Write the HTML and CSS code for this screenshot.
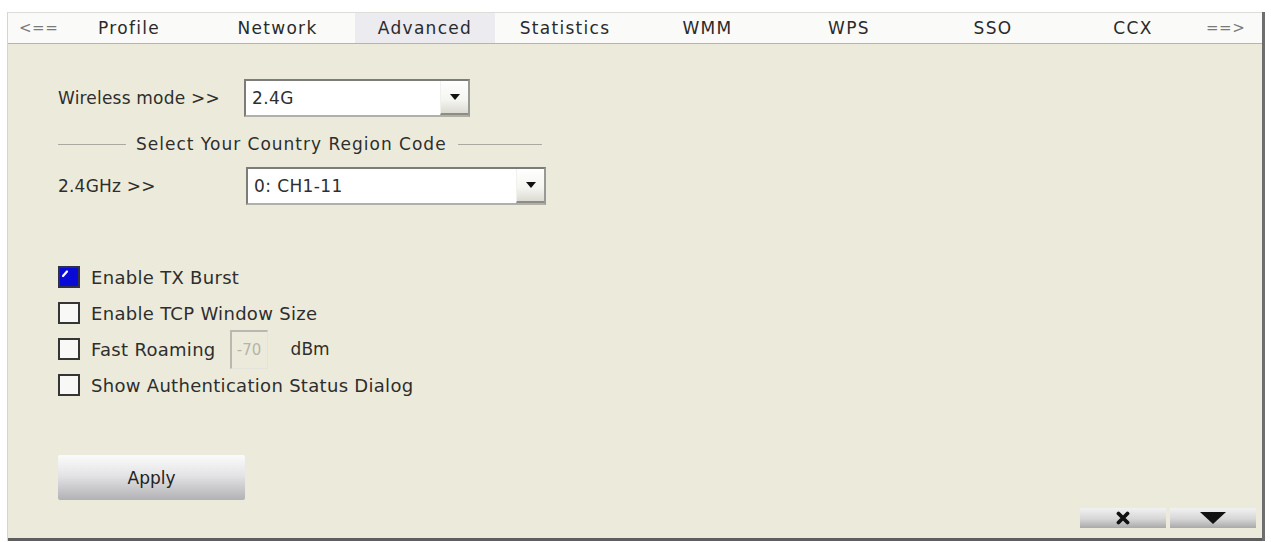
FILE: index.html
```html
<!DOCTYPE html>
<html>
<head>
<meta charset="utf-8">
<link rel="stylesheet" href="styles.css">
</head>
<body>
<div class="window">
  <div class="tabs">
    <div class="tab t-prev arrow">&lt;==</div>
    <div class="tab t-profile">Profile</div>
    <div class="tab t-network">Network</div>
    <div class="tab t-adv active">Advanced</div>
    <div class="tab t-stat">Statistics</div>
    <div class="tab t-wmm">WMM</div>
    <div class="tab t-wps">WPS</div>
    <div class="tab t-sso">SSO</div>
    <div class="tab t-ccx">CCX</div>
    <div class="tab t-next arrow">==&gt;</div>
  </div>
  <div class="content">
    <div class="field row-mode">
      <div class="label label-mode">Wireless mode &gt;&gt;</div>
      <div class="select select-mode">
        <span class="value">2.4G</span>
        <span class="drop"><span class="tri"></span></span>
      </div>
    </div>
    <div class="divider">
      <span class="line line-left"></span>
      <span class="divider-text">Select Your Country Region Code</span>
      <span class="line line-right"></span>
    </div>
    <div class="field row-region">
      <div class="label label-region">2.4GHz &gt;&gt;</div>
      <div class="select select-region">
        <span class="value">0: CH1-11</span>
        <span class="drop"><span class="tri"></span></span>
      </div>
    </div>
    <div class="checks">
      <div class="check-row">
        <span class="box checked">
          <svg width="22" height="22" viewBox="0 0 22 22"><rect x="1" y="1" width="20" height="20" fill="#0a0ad8" stroke="#30304a" stroke-width="2"/><path d="M5 10 L9 5.5" stroke="#fff" stroke-width="2.2" stroke-linecap="round"/></svg>
        </span>
        <span class="check-text">Enable TX Burst</span>
      </div>
      <div class="check-row">
        <span class="box"></span>
        <span class="check-text">Enable TCP Window Size</span>
      </div>
      <div class="check-row">
        <span class="box"></span>
        <span class="check-text">Fast Roaming</span>
        <span class="num-input">-70</span>
        <span class="unit">dBm</span>
      </div>
      <div class="check-row">
        <span class="box"></span>
        <span class="check-text">Show Authentication Status Dialog</span>
      </div>
    </div>
    <div class="apply-row">
      <div class="apply">Apply</div>
    </div>
    <div class="footer">
      <div class="fbtn fbtn-x">
        <svg width="14" height="14" viewBox="0 0 14 14"><path d="M2.5 2.5 L11.5 11.5 M11.5 2.5 L2.5 11.5" stroke="#111" stroke-width="3.8" stroke-linecap="round"/></svg>
      </div>
      <div class="fbtn fbtn-down">
        <svg width="26" height="12" viewBox="0 0 26 12"><path d="M0 0 H26 L13 12 Z" fill="#111"/></svg>
      </div>
    </div>
  </div>
</div>
</body>
</html>
```

FILE: styles.css
```css
html, body {
  margin: 0;
  padding: 0;
  background: #ffffff;
}

body {
  font-family: "DejaVu Sans", "Liberation Sans", sans-serif;
  font-size: 18px;
  color: #2e2e2e;
  width: 1271px;
  height: 542px;
  overflow: hidden;
}

.window {
  margin-top: 12px;
  margin-left: 7px;
  width: 1254px;
  border-left: 1px solid #d6d6d0;
  border-right: 3px solid #6e6e6e;
  background: #ecebdb;
}

.tabs {
  display: flex;
  height: 30px;
  background: #fafaf8;
  border-top: 1px solid #dcdcd8;
  border-bottom: 1px solid #b5b5ad;
}

.tab {
  display: flex;
  align-items: center;
  justify-content: center;
  font-size: 17px;
  letter-spacing: 1.3px;
  color: #2a2a2a;
}

.tab.active {
  background: #ebebf0;
}

.arrow {
  color: #7a7a7a;
  font-size: 15px;
  letter-spacing: 0.5px;
}

.t-prev { width: 50px; justify-content: flex-start; padding-left: 11px; box-sizing: border-box; }
.t-profile { width: 142px; }
.t-network { width: 155px; }
.t-adv { width: 140px; }
.t-stat { width: 140px; }
.t-wmm { width: 145px; }
.t-wps { width: 138px; }
.t-sso { width: 150px; }
.t-ccx { width: 130px; }
.t-next { width: 64px; justify-content: flex-start; padding-left: 8px; box-sizing: border-box; }

.content {
  padding-left: 50px;
  padding-right: 5px;
  border-bottom: 3px solid #5e5e5e;
}

.field {
  display: flex;
  align-items: center;
}

.row-mode {
  padding-top: 35px;
  height: 38px;
}

.label {
  font-size: 17px;
  letter-spacing: 0.2px;
}

.label-mode { width: 186px; }
.label-region { width: 188px; }

.select {
  display: flex;
  align-items: stretch;
  height: 34px;
  background: #ffffff;
  border-top: 2px solid #7c7c78;
  border-left: 2px solid #7c7c78;
  border-right: 2px solid #9a9a94;
  border-bottom: 2px solid #b0b0a8;
  box-sizing: content-box;
}

.select .value {
  flex: 1;
  display: flex;
  align-items: center;
  padding-left: 6px;
  font-size: 17px;
  letter-spacing: 0.4px;
}

.select .drop {
  width: 28px;
  display: flex;
  align-items: center;
  justify-content: center;
  background: linear-gradient(#ffffff, #f4f4f0 60%, #dcdbd2);
  border-left: 1px solid #f0f0ec;
  border-bottom: 2px solid #8d8d86;
  box-sizing: border-box;
}

.tri {
  width: 0;
  height: 0;
  border-left: 5px solid transparent;
  border-right: 5px solid transparent;
  border-top: 6px solid #111;
}

.select-mode { width: 222px; }
.select-region { width: 296px; }

.divider {
  display: flex;
  align-items: center;
  margin-top: 16px;
  height: 22px;
  width: 484px;
}

.line {
  height: 1px;
  background: #a9a9a2;
}

.line-left { width: 68px; margin-right: 10px; }
.line-right { flex: 1; margin-left: 11px; }

.divider-text {
  font-size: 17px;
  letter-spacing: 1px;
  white-space: nowrap;
}

.row-region {
  margin-top: 12px;
  height: 38px;
}

.checks {
  margin-top: 54px;
}

.check-row {
  display: flex;
  align-items: center;
  height: 36px;
}

.box {
  width: 18px;
  height: 18px;
  border: 2px solid #353535;
  background: #f8f8f6;
  margin-right: 11px;
  flex: none;
}

.box.checked {
  width: 22px;
  height: 22px;
  border: none;
  background: none;
}

.box.checked svg {
  display: block;
}

.check-text {
  font-size: 18px;
  letter-spacing: 0.3px;
  white-space: nowrap;
}

.num-input {
  width: 35px;
  height: 36px;
  margin-left: 14px;
  border-top: 2px solid #b8b8b0;
  border-left: 2px solid #b8b8b0;
  border-right: 1px solid #e4e4dc;
  border-bottom: 1px solid #e4e4dc;
  display: flex;
  align-items: center;
  justify-content: center;
  color: #b4b4ac;
  font-size: 15px;
}

.unit {
  margin-left: 23px;
  font-size: 17px;
}

.apply-row {
  margin-top: 52px;
}

.apply {
  width: 187px;
  height: 45px;
  display: flex;
  align-items: center;
  justify-content: center;
  background: linear-gradient(#fbfbfb, #e4e4e6 45%, #b2b2b6);
  border-radius: 2px;
  font-size: 17px;
  color: #222;
}

.footer {
  display: flex;
  justify-content: flex-end;
  gap: 4px;
  margin-top: 8px;
  padding-bottom: 10px;
  padding-right: 1px;
}

.fbtn {
  height: 20px;
  display: flex;
  align-items: center;
  justify-content: center;
  background: linear-gradient(#f2f2f2, #d6d6d6 55%, #a9a9a9);
}

.fbtn-x { width: 86px; }
.fbtn-down { width: 86px; }
```
